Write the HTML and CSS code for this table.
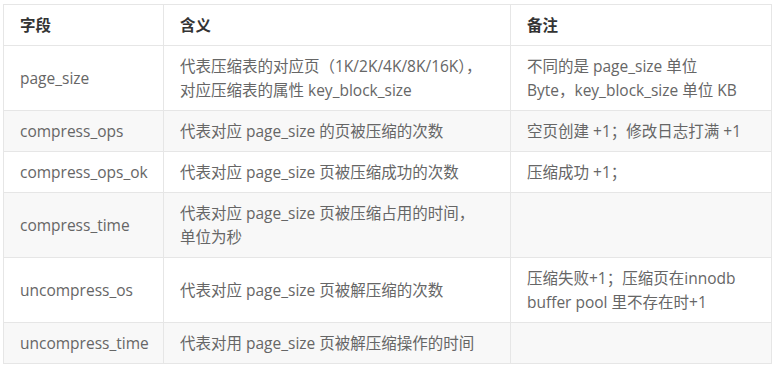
FILE: index.html
```html
<!DOCTYPE html>
<html lang="zh">
<head>
<meta charset="utf-8">
<link rel="stylesheet" href="styles.css">
</head>
<body>
<table class="tbl">
  <colgroup>
    <col class="c1"><col class="c2"><col class="c3">
  </colgroup>
  <thead>
    <tr><th>字段</th><th>含义</th><th>备注</th></tr>
  </thead>
  <tbody>
    <tr>
      <td>page_size</td>
      <td>代表压缩表的对应页（1K/2K/4K/8K/16K），<br>对应压缩表的属性 key_block_size</td>
      <td>不同的是 page_size 单位<br>Byte，key_block_size 单位 KB</td>
    </tr>
    <tr>
      <td>compress_ops</td>
      <td>代表对应 page_size 的页被压缩的次数</td>
      <td>空页创建 +1；修改日志打满 +1</td>
    </tr>
    <tr>
      <td>compress_ops_ok</td>
      <td>代表对应 page_size 页被压缩成功的次数</td>
      <td>压缩成功 +1；</td>
    </tr>
    <tr>
      <td>compress_time</td>
      <td>代表对应 page_size 页被压缩占用的时间，<br>单位为秒</td>
      <td></td>
    </tr>
    <tr>
      <td>uncompress_os</td>
      <td>代表对应 page_size 页被解压缩的次数</td>
      <td>压缩失败+1；压缩页在innodb<br>buffer pool 里不存在时+1</td>
    </tr>
    <tr>
      <td>uncompress_time</td>
      <td>代表对用 page_size 页被解压缩操作的时间</td>
      <td></td>
    </tr>
  </tbody>
</table>
</body>
</html>
```
FILE: styles.css
```css
html, body {
  margin: 0;
  padding: 0;
  background: #fff;
}
body {
  padding: 4px 0 0 3px;
  font-family: "Open Sans", "Noto Sans CJK SC", sans-serif;
  font-size: 15.5px;
  color: #666;
}
.tbl {
  border-collapse: collapse;
  width: 768px;
  table-layout: fixed;
}
.c1 { width: 160px; }
.c2 { width: 347px; }
.c3 { width: 261px; }
.tbl th,
.tbl td {
  border: 1px solid #e6e6e6;
  padding: 8px 16px;
  line-height: 24px;
  text-align: left;
  vertical-align: middle;
  white-space: nowrap;
}
.tbl th {
  font-weight: bold;
  color: #333;
}
.tbl tbody tr:nth-child(even) td {
  background: #f8f8f8;
}
```
